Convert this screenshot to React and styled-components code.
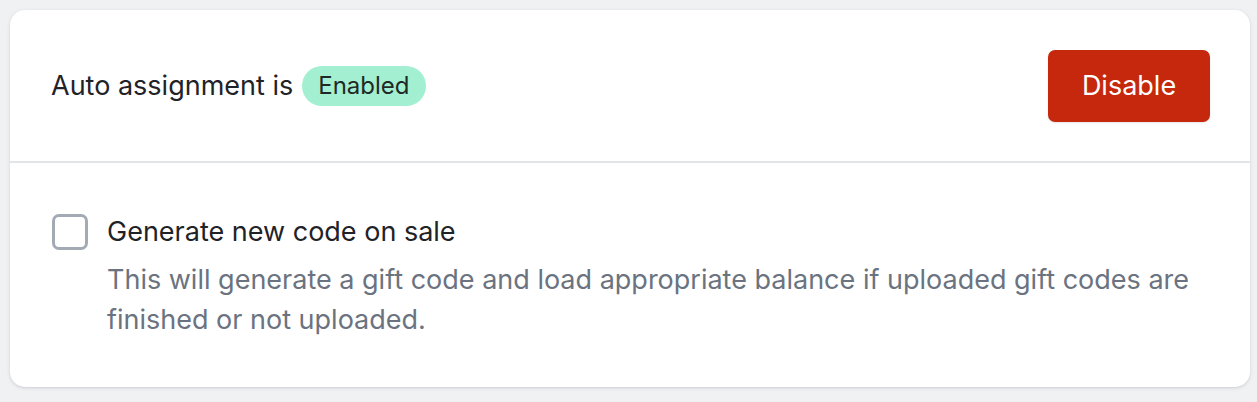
import React from "react";
import styled, { createGlobalStyle } from "styled-components";

const Global = createGlobalStyle`
  html, body { margin: 0; padding: 0; background: #f0f1f3; }
  body { font-family: Inter, "Noto Sans", sans-serif; -webkit-font-smoothing: antialiased; }
`;

const Page = styled.div`
  padding: 10px 7px 14px 10px;
`;

const Card = styled.div`
  background: #ffffff;
  border-radius: 15px;
  box-shadow: 0 1px 4px rgba(17, 24, 39, 0.1), 0 1px 2px rgba(17, 24, 39, 0.06);
  overflow: hidden;
`;

const Header = styled.div`
  display: flex;
  align-items: center;
  justify-content: space-between;
  height: 151px;
  padding: 0 40px 0 41px;
  border-bottom: 2px solid #e1e4e8;
`;

const Status = styled.div`
  display: flex;
  align-items: center;
  gap: 9px;
  font-size: 27px;
  color: #1f2328;
`;

const Badge = styled.span`
  display: inline-flex;
  align-items: center;
  height: 40px;
  padding: 0 16px;
  border-radius: 20px;
  background: #a3efd1;
  color: #1f2a26;
  font-size: 24px;
`;

const Button = styled.button`
  width: 162px;
  height: 72px;
  border: none;
  border-radius: 7px;
  background: #c5280c;
  color: #ffffff;
  font-family: inherit;
  font-size: 27px;
  box-shadow: 0 1px 2px rgba(0, 0, 0, 0.1);
`;

const Body = styled.div`
  display: flex;
  gap: 19px;
  padding: 51px 40px 47px 42px;
`;

const Box = styled.span`
  flex: none;
  box-sizing: border-box;
  width: 36px;
  height: 36px;
  border: 3px solid #a3aab4;
  border-radius: 7px;
`;

const Texts = styled.div`
  display: flex;
  flex-direction: column;
`;

const Title = styled.div`
  font-size: 27px;
  line-height: 36px;
  color: #1f2328;
`;

const Desc = styled.div`
  font-size: 27px;
  line-height: 40px;
  color: #6b7380;
  margin-top: 10px;
`;

export default function App() {
  return (
    <>
      <Global />
      <Page>
        <Card>
          <Header>
            <Status>
              Auto assignment is <Badge>Enabled</Badge>
            </Status>
            <Button>Disable</Button>
          </Header>
          <Body>
            <Box />
            <Texts>
              <Title>Generate new code on sale</Title>
              <Desc>
                This will generate a gift code and load appropriate balance if uploaded gift codes are finished or not uploaded.
              </Desc>
            </Texts>
          </Body>
        </Card>
      </Page>
    </>
  );
}
